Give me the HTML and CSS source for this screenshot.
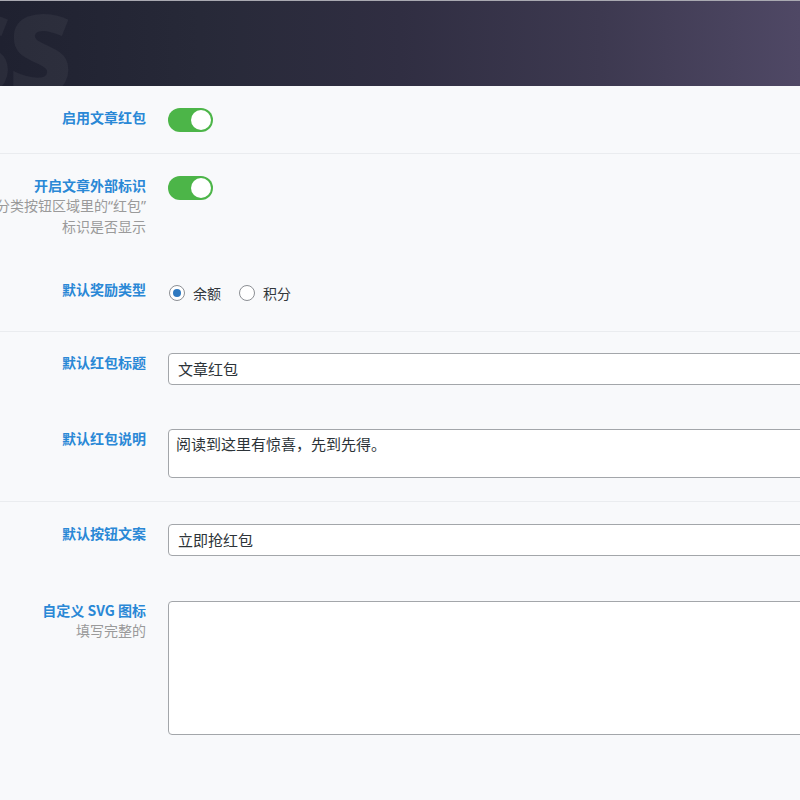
FILE: index.html
```html
<!DOCTYPE html>
<html lang="zh-CN">
<head>
<meta charset="utf-8">
<title>文章红包设置</title>
<link rel="stylesheet" href="styles.css">
</head>
<body>
<div class="header"><span class="watermark">SS</span></div>
<div class="form">
  <div class="group">
    <div class="field">
      <div class="label"><div class="title">启用文章红包</div></div>
      <div class="control"><span class="switch"><span class="knob"></span></span></div>
    </div>
  </div>
  <div class="group">
    <div class="field">
      <div class="label">
        <div class="title">开启文章外部标识</div>
        <div class="desc">分类按钮区域里的<span class="q">“</span>红包<span class="q">”</span></div>
        <div class="desc">标识是否显示</div>
      </div>
      <div class="control"><span class="switch"><span class="knob"></span></span></div>
    </div>
    <div class="field field-radio">
      <div class="label"><div class="title">默认奖励类型</div></div>
      <div class="control">
        <div class="radios">
          <label class="radio"><span class="dot checked"></span>余额</label>
          <label class="radio"><span class="dot"></span>积分</label>
        </div>
      </div>
    </div>
  </div>
  <div class="group">
    <div class="field field-first">
      <div class="label"><div class="title">默认红包标题</div></div>
      <div class="control"><div class="input">文章红包</div></div>
    </div>
    <div class="field field-area">
      <div class="label"><div class="title">默认红包说明</div></div>
      <div class="control"><div class="textarea small">阅读到这里有惊喜，先到先得。</div></div>
    </div>
  </div>
  <div class="group group-last">
    <div class="field">
      <div class="label"><div class="title">默认按钮文案</div></div>
      <div class="control"><div class="input">立即抢红包</div></div>
    </div>
    <div class="field field-last">
      <div class="label">
        <div class="title">自定义 SVG 图标</div>
        <div class="desc">填写完整的</div>
      </div>
      <div class="control"><div class="textarea large"></div></div>
    </div>
  </div>
</div>
</body>
</html>
```

FILE: styles.css
```css
html, body {
  margin: 0;
  padding: 0;
  overflow: hidden;
  width: 800px;
  height: 800px;
  background: #f8f9fb;
  font-family: "Noto Sans CJK SC", "Noto Sans", sans-serif;
}

.header {
  position: relative;
  height: 85px;
  border-top: 1px solid #a9a9b1;
  background: linear-gradient(90deg, #1f2130 0%, #272938 25%, #302e42 50%, #3d3950 75%, #4f4865 100%);
  overflow: hidden;
}

.watermark {
  position: absolute;
  left: -52px;
  top: -16px;
  font-family: "Open Sans", "DejaVu Sans", sans-serif;
  font-weight: 800;
  font-size: 110px;
  line-height: 1.2;
  letter-spacing: -3px;
  color: rgba(255, 255, 255, 0.05);
}

.form {
  margin-left: -60px;
}

.group {
  border-bottom: 1px solid #eaecef;
}

.group-last {
  border-bottom: 0;
}

.field {
  display: grid;
  grid-template-columns: 206px 700px;
  column-gap: 22px;
  padding: 22px 0;
}

.group:first-child .field {
  padding-bottom: 21px;
}

.field-radio {
  padding-bottom: 25px;
}

.field-first {
  padding-top: 21px;
}

.field-area {
  padding-bottom: 23px;
}

.field-last {
  padding-top: 23px;
}

.label {
  text-align: right;
  white-space: nowrap;
  margin-top: -1px;
}

.title {
  font-size: 14px;
  line-height: 20px;
  font-weight: 700;
  color: #2a88d6;
}

.desc {
  font-size: 14px;
  line-height: 20px;
  color: #9a9a9a;
}

.q {
  font-family: "Noto Sans", "DejaVu Sans", sans-serif;
}

.switch {
  display: block;
  width: 45px;
  height: 24px;
  border-radius: 12px;
  background: #4cb548;
  position: relative;
}

.knob {
  position: absolute;
  right: 2px;
  top: 2px;
  width: 20px;
  height: 20px;
  border-radius: 50%;
  background: #fff;
}

.radios {
  display: flex;
  align-items: center;
  height: 26px;
  font-size: 14px;
  color: #32373c;
}

.radio {
  display: flex;
  align-items: center;
  gap: 8px;
  margin-right: 17px;
}

.dot {
  width: 16px;
  height: 16px;
  box-sizing: border-box;
  border: 1px solid #8c8f94;
  border-radius: 50%;
  background: #fff;
  margin-left: 1px;
  position: relative;
}

.dot.checked::after {
  content: "";
  position: absolute;
  left: 3px;
  top: 3px;
  width: 8px;
  height: 8px;
  border-radius: 50%;
  background: #2f79c0;
}

.input, .textarea {
  box-sizing: border-box;
  width: 700px;
  background: #fff;
  border: 1px solid #a3a6aa;
  border-radius: 4px;
  color: #2c3338;
  font-size: 15px;
}

.input {
  height: 32px;
  line-height: 30px;
  padding: 0 9px;
}

.textarea {
  padding: 2px 7px;
  line-height: 24px;
}

.textarea.small {
  height: 49px;
}

.textarea.large {
  height: 134px;
}
```
